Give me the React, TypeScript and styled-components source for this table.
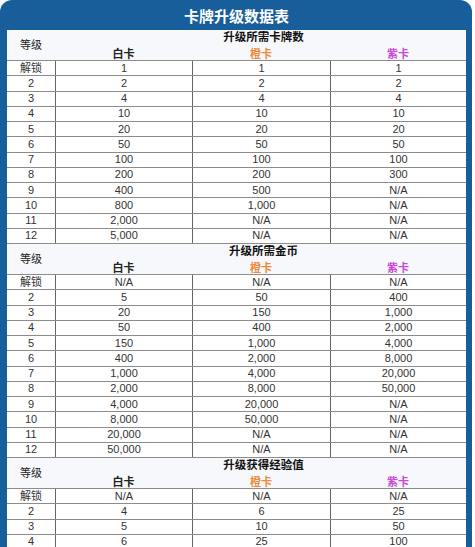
import React from "react";
import styled, { createGlobalStyle } from "styled-components";

const GlobalStyle = createGlobalStyle`
  html, body {
    margin: 0;
    padding: 0;
    background: #ffffff;
    height: 547px;
    overflow: hidden;
  }
  body {
    font-family: "Liberation Sans", "Noto Sans CJK SC", sans-serif;
  }
`;

const COLS = "48px 137px 138px 136px";

type Section = {
  title: string;
  rows: string[][];
};

const sections: Section[] = [
  {
    title: "升级所需卡牌数",
    rows: [
      ["解锁", "1", "1", "1"],
      ["2", "2", "2", "2"],
      ["3", "4", "4", "4"],
      ["4", "10", "10", "10"],
      ["5", "20", "20", "20"],
      ["6", "50", "50", "50"],
      ["7", "100", "100", "100"],
      ["8", "200", "200", "300"],
      ["9", "400", "500", "N/A"],
      ["10", "800", "1,000", "N/A"],
      ["11", "2,000", "N/A", "N/A"],
      ["12", "5,000", "N/A", "N/A"],
    ],
  },
  {
    title: "升级所需金币",
    rows: [
      ["解锁", "N/A", "N/A", "N/A"],
      ["2", "5", "50", "400"],
      ["3", "20", "150", "1,000"],
      ["4", "50", "400", "2,000"],
      ["5", "150", "1,000", "4,000"],
      ["6", "400", "2,000", "8,000"],
      ["7", "1,000", "4,000", "20,000"],
      ["8", "2,000", "8,000", "50,000"],
      ["9", "4,000", "20,000", "N/A"],
      ["10", "8,000", "50,000", "N/A"],
      ["11", "20,000", "N/A", "N/A"],
      ["12", "50,000", "N/A", "N/A"],
    ],
  },
  {
    title: "升级获得经验值",
    rows: [
      ["解锁", "N/A", "N/A", "N/A"],
      ["2", "4", "6", "25"],
      ["3", "5", "10", "50"],
      ["4", "6", "25", "100"],
    ],
  },
];

export default function App() {
  return (
    <>
      <GlobalStyle />
      <Frame>
        <TitleBar>卡牌升级数据表</TitleBar>
        <Table>
          {sections.map((section) => (
            <div key={section.title}>
              <SectionHead>
                <LevelLabel>等级</LevelLabel>
                <SectionTitle>{section.title}</SectionTitle>
                <CardLabel $color="#222222">白卡</CardLabel>
                <CardLabel $color="#ef8a3c">橙卡</CardLabel>
                <CardLabel $color="#c848d8">紫卡</CardLabel>
              </SectionHead>
              {section.rows.map((row, i) => (
                <Row key={i}>
                  {row.map((cell, j) => (
                    <Cell key={j} $first={j === 0}>
                      {cell}
                    </Cell>
                  ))}
                </Row>
              ))}
            </div>
          ))}
        </Table>
      </Frame>
    </>
  );
}

const Frame = styled.div`
  width: 459px;
  height: 547px;
  padding: 0 6px 0 7px;
  background-color: #185e9b;
  border-radius: 12px 12px 0 0;
  overflow: hidden;
`;

const TitleBar = styled.div`
  height: 30px;
  display: flex;
  align-items: center;
  justify-content: center;
  color: #ffffff;
  font-size: 15px;
  font-weight: bold;
`;

const Table = styled.div`
  background-color: #ffffff;
  min-height: 517px;
`;

const SectionHead = styled.div`
  height: 31px;
  display: grid;
  grid-template-columns: ${COLS};
  grid-template-rows: 14px 17px;
  background-color: #f6f8fb;
  border-bottom: 1px solid #8c8c8c;
  box-sizing: border-box;
  font-size: 11px;
  font-weight: bold;
`;

const LevelLabel = styled.div`
  grid-row: 1 / 3;
  grid-column: 1;
  display: flex;
  align-items: center;
  justify-content: center;
  padding-bottom: 4px;
  color: #222222;
  font-weight: normal;
`;

const SectionTitle = styled.div`
  grid-row: 1;
  grid-column: 2 / 5;
  display: flex;
  align-items: flex-end;
  justify-content: center;
  padding-left: 6px;
  font-size: 11.5px;
  color: #111111;
`;

const CardLabel = styled.div<{ $color: string }>`
  grid-row: 2;
  display: flex;
  align-items: center;
  justify-content: center;
  color: ${(props) => props.$color};
`;

const Row = styled.div`
  height: 15.25px;
  display: grid;
  grid-template-columns: ${COLS};
  border-bottom: 1px solid #8c8c8c;
  box-sizing: border-box;
`;

const Cell = styled.div<{ $first: boolean }>`
  display: flex;
  align-items: center;
  justify-content: center;
  font-size: 11px;
  color: #333333;
  line-height: 1;
  border-left: ${(props) => (props.$first ? "none" : "1px solid #666666")};
`;
